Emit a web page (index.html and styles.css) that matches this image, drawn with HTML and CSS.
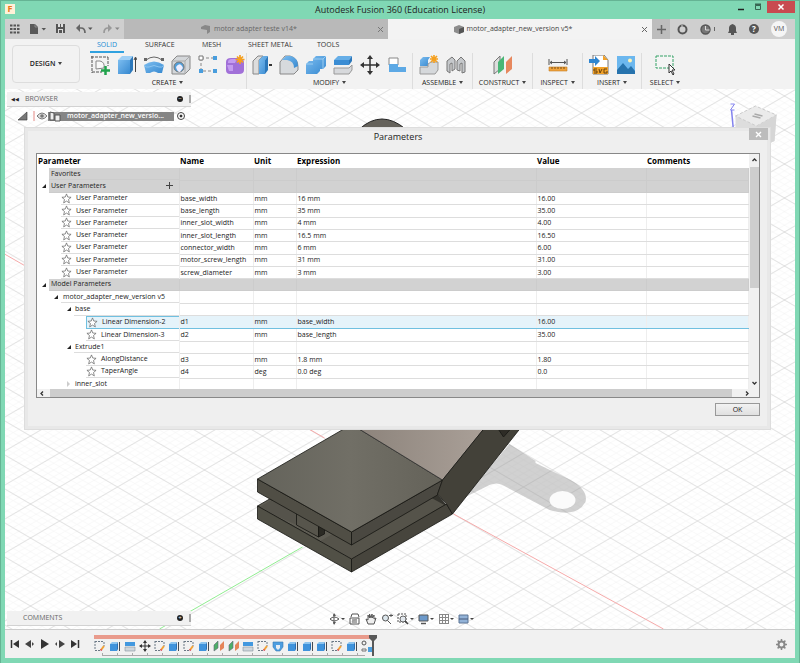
FILE: index.html
```html
<!DOCTYPE html>
<html lang="en">
<head>
<meta charset="utf-8">
<title>Autodesk Fusion 360 (Education License)</title>
<link rel="stylesheet" href="styles.css">
</head>
<body>
<svg class="defs" aria-hidden="true">
  <defs>
    <symbol id="star" viewBox="0 0 12 12"><path d="M6 1l1.400 3.400 3.600.3-2.800 2.400.9 3.700L6 8.800l-3.100 2 .9-3.700L1 4.700l3.600-.3z" fill="#fff" stroke="#666" stroke-width=".8"/></symbol>
    <symbol id="t-sketch" viewBox="0 0 12 12"><path d="M1 1.500h9M1 1v9M1 10.500h6M10 2v4" fill="none" stroke="#6b7885" stroke-dasharray="2 1"/><path d="M7 10l3-4" stroke="#f0a33a" stroke-width="2"/><path d="M6.300 9.500l1.500 1" stroke="#d8405a" stroke-width="1.300"/></symbol>
    <symbol id="t-box" viewBox="0 0 12 12"><path d="M1 4l2-2h6L8 4z" fill="#8dc4ee"/><path d="M1 4h7v7H1z" fill="#3f93dc"/><path d="M8 4l1-2v7l-1 2z" fill="#2a70b5"/><path d="M10.500 2v9" stroke="#454b52"/></symbol>
    <symbol id="t-split" viewBox="0 0 12 12"><path d="M1 2h10v4H1z" fill="#4298df"/><path d="M1 7h10v4H1z" fill="#cfd6dc" stroke="#8794a0" stroke-width=".6"/></symbol>
    <symbol id="t-plane" viewBox="0 0 12 12"><path d="M1 11V5l4-4v7z" fill="#4caf68" stroke="#667" stroke-width=".6"/><path d="M7 11V5l4-4v7z" fill="#e58559"/></symbol>
    <symbol id="t-move" viewBox="0 0 12 12"><path d="M6 1v10M1 6h10" stroke="#333"/><path d="M6 0l2 3H4zM6 12l2-3H4zM0 6l3-2v4zM12 6L9 4v4z" fill="#333"/></symbol>
    <symbol id="t-cut" viewBox="0 0 12 12"><path d="M1 2h10v5l-3 4H4L1 7z" fill="#4d9de0" stroke="#3878b1" stroke-width=".6"/><path d="M4 5h4v3L6 10 4 8z" fill="#e6edf4"/></symbol>
    <linearGradient id="blue" x2="1" y2="1"><stop stop-color="#7cbdf0"/><stop offset="1" stop-color="#3789d0"/></linearGradient>
  </defs>
</svg>

<header class="titlebar">
  <span class="app-logo">F</span>
  <h1>Autodesk Fusion 360 (Education License)</h1>
  <div class="window-buttons">
    <button class="win" aria-label="Minimize"><svg width="8" height="8"><path d="M1 6.500h6" stroke="#222" stroke-width="1.500"/></svg></button>
    <button class="win" aria-label="Maximize"><svg width="8" height="8"><path d="M1.500 2.500h5v4h-5z" fill="none" stroke="#376552"/><path d="M1 1.500h6" stroke="#376552" stroke-width="2"/></svg></button>
    <button class="win close" aria-label="Close"><svg width="8" height="8"><path d="M1.500 1.500l5 5m0-5l-5 5" stroke="#fff" stroke-width="1.500"/></svg></button>
  </div>
</header>

<nav class="tabstrip">
  <div class="quick">
    <button aria-label="Data panel"><svg width="10" height="10"><path d="M0 1.500h10M0 5h10M0 8.500h10" stroke="#555" stroke-width="2.200" stroke-dasharray="2.500 1"/></svg></button>
    <button aria-label="File"><svg width="16" height="10"><path d="M0 0h5l3 3v7H0z" fill="#595959"/><path d="M5 0v3h3" fill="none" stroke="#aaa" stroke-width=".6"/><path d="M11.500 4h4.500l-2.200 2.500z" fill="#555"/></svg></button>
    <button aria-label="Save"><svg width="10" height="10"><path d="M0 0h9v9H0z" fill="#555"/><path d="M2 0h5v3H2zM2 5h5v4H2z" fill="#ddd"/><path d="M4 0h1v3H4zM3 6h3v3H3z" fill="#555"/></svg></button>
    <button aria-label="Undo"><svg width="17" height="10"><path d="M2 4h3q4 0 4 5" fill="none" stroke="#666" stroke-width="1.700"/><path d="M0 4l4-4v8z" fill="#666"/><path d="M12 3.500h4.500l-2.200 2.500z" fill="#555"/></svg></button>
    <button aria-label="Redo"><svg width="17" height="10"><path d="M7 4H5Q1 4 1 9" fill="none" stroke="#999" stroke-width="1.700"/><path d="M9 4L5 0v8z" fill="#999"/><path d="M12 3.500h4.500l-2.200 2.500z" fill="#888"/></svg></button>
  </div>
  <div class="doc-tab"><svg width="10" height="9"><path d="M0 2l4-2 5 1v6L6 9V5L0 4z" fill="#888"/></svg><span>motor adapter teste v14*</span><button aria-label="Close tab"><svg width="7" height="7"><path d="M1 1l5 5m0-5L1 6" stroke="#777"/></svg></button></div>
  <div class="doc-tab active"><svg width="10" height="9"><path d="M0 2l5-2 5 2v5L5 9 0 7z" fill="#8d8d8d"/><path d="M5 4l5-2v5L5 9z" fill="#555"/></svg><span>motor_adapter_new_version v5*</span><button aria-label="Close tab"><svg width="7" height="7"><path d="M1 1l5 5m0-5L1 6" stroke="#666"/></svg></button></div>
  <button class="new-tab" aria-label="New tab"><svg width="9" height="9"><path d="M4.500 0v9M0 4.500h9" stroke="#666" stroke-width="1.500"/></svg></button>
  <div class="account">
    <button aria-label="Extensions"><svg width="11" height="11"><circle cx="5.500" cy="5.500" r="4" fill="none" stroke="#555" stroke-width="2"/><path d="M5 5V1" stroke="#d0d0d0"/></svg></button>
    <button aria-label="Job status"><svg width="16" height="11"><circle cx="5.500" cy="5.500" r="4.500" fill="#777" stroke="#555" stroke-width="1.400"/><path d="M5.500 2v4h4" fill="none" stroke="#ddd"/><path d="M14.500 3v4" stroke="#666"/></svg></button>
    <button aria-label="Notifications"><svg width="9" height="11"><path d="M0 9l1-2V4q0-3 3.500-4Q8 1 8 4v3l1 2z" fill="#555"/><path d="M3 10h3" stroke="#555" stroke-width="2"/></svg></button>
    <button aria-label="Help" class="help">?</button>
    <button class="avatar">VM</button>
  </div>
</nav>

<section class="toolbar">
  <button class="design">DESIGN <i class="caret"></i></button>
  <div class="ribbon">
    <div class="ribbon-tabs"><a href="#" class="on">SOLID</a><a href="#" class="surface">SURFACE</a><a href="#" class="mesh">MESH</a><a href="#" class="sheet">SHEET METAL</a><a href="#">TOOLS</a></div>
    <div class="groups">
      <div class="group create"><div class="icons">
        <svg viewBox="0 0 20 20"><path d="M1 2h17M2 1v17M2 17h10M18 2v9" fill="none" stroke="#555" stroke-dasharray="3 1"/><path d="M6 14V6h4q5 1 4 7z" fill="#f8f8f8" stroke="#888"/><path d="M15.500 11v9M11 15.500h9" stroke="#21a34c" stroke-width="2.500"/></svg>
        <svg viewBox="0 0 20 20"><path d="M1 5l4-4h11l-3 4z" fill="#a0d0f5"/><path d="M1 5h12v14H1z" fill="url(#blue)"/><path d="M13 5l3-4v14l-3 4z" fill="#2c78bb"/><path d="M18.500 3v14M17 5l1.500-3L20 5" fill="none" stroke="#444"/></svg>
        <svg viewBox="0 0 20 20"><path d="M2 5q8-6 16 0" fill="none" stroke="#666"/><path d="M0 3h3v3H0zM17 3h3v3h-3z" fill="#666"/><path d="M0 10q10-7 20 0l-2 8h-4q-4-3-8 0H2z" fill="url(#blue)"/><path d="M0 10q2 3 5 2 5-3 10 0 3 1 5-2" fill="none" stroke="#8cc5f0"/></svg>
        <svg viewBox="0 0 20 20"><path d="M1 6l5-5h13v13l-5 5H1z" fill="#d4d7da" stroke="#888"/><path d="M1 6h13v13M14 6l5-5" fill="none" stroke="#aaa"/><circle cx="8" cy="12" r="5" fill="#519fda" stroke="#777"/><path d="M5 12q4-6 7 1l-3 4q-3 0-4-5" fill="#eef"/></svg>
        <svg viewBox="0 0 20 20"><path d="M3 3h14M3 3v13h14" fill="none" stroke="#888" stroke-dasharray="3 2"/><path d="M1 1h4v4H1z" fill="#fff" stroke="#777"/><path d="M15 1h4v4h-4zM1 14h4v4H1zM15 14h4v4h-4z" fill="#489ddd"/></svg>
        <svg viewBox="0 0 20 20"><path d="M1 7q0-4 5-4h8q5 0 5 5v7q0 4-5 4H5q-4 0-4-4z" fill="#a170d8"/><path d="M3 7q0-3 4-3h5L10 8H3zM2 10h6v6H4z" fill="#c49cf0"/><path d="M15 0v9M10.500 4.500h9M12 1.500l6 6m0-6l-6 6" stroke="#f5a01e" stroke-width="1.700"/></svg>
      </div><button>CREATE <i class="caret"></i></button></div>
      <div class="group modify"><div class="icons">
        <svg viewBox="0 0 20 20"><path d="M1 6l5-5h5L7 5v14H1z" fill="#ddd" stroke="#888"/><path d="M7 5l4-4h5l-3 4v14H7z" fill="url(#blue)"/><path d="M13 5l3-4v14l-3 4z" fill="#2c78bb"/><path d="M17 10h3" stroke="#333" stroke-width="2"/></svg>
        <svg viewBox="0 0 20 20"><path d="M1 7l5-6h5q8 2 8 11v3l-4 4H1z" fill="#d7dadd" stroke="#888"/><path d="M7 1h5q7 2 7 10l-4 2q0-7-7-8H3z" fill="url(#blue)"/></svg>
        <svg viewBox="0 0 20 20"><path d="M7 4l3-3h10v10l-3 3h-3v2l-3 3H0V9l3-3h4z" fill="url(#blue)"/><path d="M7 4h10v10M17 4l3-3M0 9h7" fill="none" stroke="#9bccf1"/></svg>
        <svg viewBox="0 0 20 20"><path d="M1 5l4-4h14l-3 4v4H1z" fill="#66aee7"/><path d="M1 5h15v5H1z" fill="#3b8dd4"/><path d="M16 5l3-4v5l-3 4z" fill="#2c78bb"/><path d="M1 13h15l3-3v5l-3 4H1z" fill="#d7d9dc" stroke="#999"/></svg>
        <svg viewBox="0 0 20 20"><path d="M10 2v16M2 10h16" stroke="#333" stroke-width="1.500"/><path d="M10 0l3 4H7zM10 20l3-4H7zM0 10l4-3v6zM20 10l-4-3v6z" fill="#333"/></svg>
        <svg viewBox="0 0 20 20"><path d="M2 3h9v7H2z" fill="#fff" stroke="#888"/><path d="M2 9h9v3h8v5H2z" fill="#5da9e5"/></svg>
      </div><button>MODIFY <i class="caret"></i></button></div>
      <div class="group assemble"><div class="icons">
        <svg viewBox="0 0 20 20"><path d="M1 5l3-3h7L9 5v6H1z" fill="url(#blue)"/><path d="M1 12h8V9l3-2h7v8l-3 4H1z" fill="#d5d8db" stroke="#999"/><path d="M15 0v8M11 4h8M12 1l6 6m0-6l-6 6" stroke="#f5a01e" stroke-width="1.600"/></svg>
        <svg viewBox="0 0 20 20"><path d="M1 6l5-4 3 3v9l-3 2V8L4 9v9l-3-2zM19 6l-4-4-4 4v9l3 1V9l2-1v10l3-1z" fill="#c5c8cb" stroke="#777"/></svg>
      </div><button>ASSEMBLE <i class="caret"></i></button></div>
      <div class="group construct"><div class="icons"><svg viewBox="0 0 20 20"><path d="M1 7l6-6v13l-6 5z" fill="#ddd" stroke="#777"/><path d="M5 7l6-6v13l-6 5z" fill="#49b675"/><path d="M13 7l6-6v13l-6 5z" fill="#e7885e"/></svg></div><button>CONSTRUCT <i class="caret"></i></button></div>
      <div class="group inspect"><div class="icons"><svg viewBox="0 0 20 20"><path d="M1 4v6M19 4v6M2 7.500h16M4 6L2 7.500 4 9M16 6l2 1.500L16 9" fill="none" stroke="#555"/><path d="M1 12h18v4H1z" fill="#f1a33c" stroke="#c37c24" stroke-width=".6"/><path d="M4 12v2m3-2v2m3-2v2m3-2v2m3-2v2" stroke="#7b5015"/></svg></div><button>INSPECT <i class="caret"></i></button></div>
      <div class="group insert"><div class="icons">
        <svg viewBox="0 0 20 20"><path d="M4 0h11l4 5v14H4z" fill="#fff" stroke="#777"/><path d="M14 0l5 5h-5zM4 12h15v7H4z" fill="#f2a229"/><path d="M8 14H5v2h3v2H5m5-4l1 4 2-4m5 0h-3v4h3v-2" fill="none" stroke="#684411"/><path d="M0 4h6V1l5 5-5 5V8H0z" fill="#2f86d1"/></svg>
        <svg viewBox="0 0 20 20"><path d="M1 1h18v18H1z" fill="#6cb7ee"/><path d="M1 15l6-7 5 6 3-3 4 5v3H1z" fill="#2773ad"/><circle cx="14" cy="5.500" r="2" fill="#fff3b5"/></svg>
      </div><button>INSERT <i class="caret"></i></button></div>
      <div class="group select"><div class="icons"><svg viewBox="0 0 20 20"><path d="M1 1h17v12H1z" fill="#f5f5f5" stroke="#35a266" stroke-dasharray="3 1"/><path d="M14 9v9l2-2 2 4 1-1-2-4h3z" fill="#fff" stroke="#333"/></svg></div><button>SELECT <i class="caret"></i></button></div>
    </div>
  </div>
</section>

<main class="viewport">
  <svg class="scene" viewBox="5 89 791 540" preserveAspectRatio="xMidYMid slice" role="img" aria-label="Motor adapter model">
    <defs>
      <pattern id="grid" width="58" height="34" patternUnits="userSpaceOnUse" x="2" y="11">
        <path d="M0 6.800L11.600 0M0 13.600L23.200 0M0 20.400L34.800 0M0 27.200L46.400 0M11.600 34L58 6.800M23.200 34L58 13.600M34.800 34L58 20.400M46.400 34L58 27.200M46.400 0L58 6.800M34.800 0L58 13.600M23.200 0L58 20.400M11.600 0L58 27.200M0 6.800L46.400 34M0 13.600L34.800 34M0 20.400L23.200 34M0 27.200L11.600 34" stroke="#f3f3f3" stroke-width=".6"/>
        <path d="M0 0l58 34M58 0L0 34" stroke="#d4d4d4" stroke-width=".8"/>
      </pattern>
      <linearGradient id="top" x1="0" x2="1"><stop stop-color="#64635b"/><stop offset=".5" stop-color="#716f66"/><stop offset="1" stop-color="#646259"/></linearGradient>
      <linearGradient id="slope" x1="0" x2="1"><stop stop-color="#8c837b"/><stop offset="1" stop-color="#aaa098"/></linearGradient>
    </defs>
    <path d="M5 89h791v540H5z" fill="#fff"/>
    <path d="M5 89h791v540H5z" fill="url(#grid)"/>
    <path d="M464 498l46-54 26 17v2l35 17q18 10 15 22-9 16-36 8l-47-25q-6-3-13 0z" fill="#999" fill-opacity=".45"/>
    <ellipse cx="563" cy="500" rx="13" ry="9" fill="#fbfbfb"/>
    <path d="M5 254l320 184M454 514l210 115" stroke="#f6aaaa" fill="none"/>
    <path d="M303 547L160 629" stroke="#91ed91"/>
    <path d="M360 129q22-20 46 0z" fill="#65625b" stroke="#222"/>
    <g stroke="#171713" stroke-linejoin="round" stroke-width=".8">
      <path d="M258 506l88-51 101 50-95 54z" fill="#5f5d54"/>
      <path d="M270 499l76-44 92 39 9 11-14 8-15-8-66 40-30-17-26-7z" fill="#34332d" stroke="none"/>
      <path d="M278 499l19 12v14l-22-10-15-8 10-6z" fill="#55534b" stroke="none"/>
      <path d="M352 559l-31-18 12-7 19 11 80-47 13 7z" fill="#55534a" stroke="none"/>
      <path d="M297 510l22 12v15l-22-12z" fill="#57554c"/>
      <path d="M319 522l6 4v8l-6 3z" fill="#2b2a24"/>
      <path d="M258 506l94 53v13l-94-53z" fill="#515046"/>
      <path d="M352 559l95-55 6 10-101 58z" fill="#47453d"/>
      <path d="M258 479l94 53v13l-94-53z" fill="#504e45"/>
      <path d="M352 532l91-52-5 15-86 50z" fill="#4a4841"/>
      <path d="M258 479l88-51h12l85 52-91 52z" fill="url(#top)"/>
      <path d="M358 428h127l-42 52z" fill="url(#slope)" stroke="#333"/>
      <path d="M443 480l42-52h36l-68 86-6-10-9-10z" fill="#434139"/>
      <path d="M498 428h14l-8 9z" fill="#2e2c26"/>
    </g>
    <path d="M734 131l-2-21" stroke="#8282ee" stroke-width="1.500" fill="none"/>
    <path d="M731 104h4l-4 6h4" stroke="#8282ee" fill="none"/>
    <path d="M736 116l20-10 21 9-2 26-18 8-21-10z" fill="#ddd"/>
    <path d="M736 116l20-10 21 9-20 11z" fill="#ebebeb" stroke="#ccc" stroke-dasharray="3 2"/>
    <path d="M757 126l20-11-2 26-18 8z" fill="#d6d6d6"/>
    <path d="M753 116l8 2m-6-4l8 2" stroke="#aaa" stroke-width="1.500"/>
  </svg>

  <aside class="browser">
    <div class="panel-head"><span class="chevrons">◀◀</span><h2>BROWSER</h2><button class="dot" aria-label="Collapse browser">−</button><i class="grip"></i></div>
    <div class="component">
      <svg width="60" height="12"><path d="M10 2v8H1z" fill="#777" stroke="#333" stroke-width=".6"/><path d="M17 1v10" stroke="#e68a85"/><path d="M20 6q5-6 10 0-5 6-10 0z" fill="#ddd" stroke="#777"/><circle cx="25" cy="6" r="1.800" fill="#777"/></svg>
      <div class="selected"><svg width="14" height="12"><path d="M2 2l4 1v7H2zM7 5h5v6H7z" fill="#eee" stroke="#555"/></svg><span>motor_adapter_new_versio...</span></div>
      <label class="radio"><input type="radio" checked aria-label="Activate component"></label>
    </div>
  </aside>

  <section class="comments panel-head"><h2>COMMENTS</h2><button class="dot" aria-label="Expand comments">+</button><i class="grip"></i></section>

  <div class="navbar">
    <button aria-label="Orbit"><svg width="16" height="12"><path d="M5 1v10M1 6q4-4 9 0-5 4-9 0" fill="none" stroke="#555"/><path d="M4 3l1-3 2 3zM4 9l1 3 2-3z" fill="#555"/><path d="M12 5h4l-2 2z" fill="#444"/></svg></button>
    <button aria-label="Look at"><svg width="12" height="12"><path d="M1 5h9v6H1zM2 4l1-3h6l1 3M3 7h5M3 9h5" fill="none" stroke="#555"/></svg></button>
    <button aria-label="Pan"><svg width="12" height="12"><path d="M3 11L1 6l2 1V2l1.500 3V1L6 5l1-4 .5 4L9 2v4l2-1-2 6z" fill="#eee" stroke="#555"/></svg></button>
    <button aria-label="Zoom"><svg width="12" height="12"><circle cx="4.500" cy="5" r="3" fill="#dce6ec" stroke="#555"/><path d="M6.500 7.500L10 11M8 2.500h4M10 1v3" stroke="#555"/></svg></button>
    <button aria-label="Zoom window"><svg width="17" height="12"><path d="M1 1h8v8H1z" fill="none" stroke="#555" stroke-dasharray="2 1"/><circle cx="6" cy="6" r="3" fill="#e2e8ee" stroke="#666"/><path d="M8 8l3 3" stroke="#444" stroke-width="1.500"/><path d="M13 5h4l-2 2z" fill="#444"/></svg></button>
    <button aria-label="Display settings"><svg width="16" height="12"><path d="M1 2h9v6H1z" fill="#6b98c9" stroke="#555"/><path d="M3 10.500h5" stroke="#555" stroke-width="1.500"/><path d="M12 5h4l-2 2z" fill="#444"/></svg></button>
    <button aria-label="Grid settings"><svg width="16" height="12"><path d="M1.500 1v10M4.500 1v10M7.500 1v10M10.500 1v10M1 1.500h10M1 4.500h10M1 7.500h10M1 10.500h10" stroke="#888"/><path d="M12 5h4l-2 2z" fill="#444"/></svg></button>
    <button aria-label="Viewports"><svg width="16" height="12"><path d="M1 2h9v8H1z" fill="#92b2d7" stroke="#5d7494"/><path d="M1 6h9" stroke="#44597a"/><path d="M12 5h4l-2 2z" fill="#444"/></svg></button>
  </div>

  <section class="dialog" role="dialog" aria-labelledby="dlg-title">
    <header><h2 id="dlg-title">Parameters</h2><button class="dialog-close" aria-label="Close dialog"><svg width="7" height="7"><path d="M1 1l5 5m0-5L1 6" stroke="#fff" stroke-width="1.400"/></svg></button></header>
    <div class="sheet-box">
      <div class="table-row">
        <div class="table-clip">
        <table>
          <colgroup><col class="c1"><col class="c2"><col class="c3"><col class="c4"><col class="c5"><col></colgroup>
          <thead><tr><th>Parameter</th><th>Name</th><th>Unit</th><th>Expression</th><th>Value</th><th>Comments</th></tr></thead>
          <tbody>
            <tr class="section"><td><div class="l0">Favorites</div></td><td></td><td></td><td></td><td></td><td></td></tr>
            <tr class="section"><td class="open"><div class="l0">User Parameters<button class="add" aria-label="Add user parameter"><svg width="7" height="7"><path d="M3.500 0v7M0 3.500h7" stroke="#444"/></svg></button></div></td><td></td><td></td><td></td><td></td><td></td></tr>
            <tr><td><div class="l1"><svg><use href="#star"/></svg>User Parameter</div></td><td>base_width</td><td>mm</td><td>16 mm</td><td>16.00</td><td></td></tr>
            <tr><td><div class="l1"><svg><use href="#star"/></svg>User Parameter</div></td><td>base_length</td><td>mm</td><td>35 mm</td><td>35.00</td><td></td></tr>
            <tr><td><div class="l1"><svg><use href="#star"/></svg>User Parameter</div></td><td>inner_slot_width</td><td>mm</td><td>4 mm</td><td>4.00</td><td></td></tr>
            <tr><td><div class="l1"><svg><use href="#star"/></svg>User Parameter</div></td><td>inner_slot_length</td><td>mm</td><td>16.5 mm</td><td>16.50</td><td></td></tr>
            <tr><td><div class="l1"><svg><use href="#star"/></svg>User Parameter</div></td><td>connector_width</td><td>mm</td><td>6 mm</td><td>6.00</td><td></td></tr>
            <tr><td><div class="l1"><svg><use href="#star"/></svg>User Parameter</div></td><td>motor_screw_length</td><td>mm</td><td>31 mm</td><td>31.00</td><td></td></tr>
            <tr><td><div class="l1"><svg><use href="#star"/></svg>User Parameter</div></td><td>screw_diameter</td><td>mm</td><td>3 mm</td><td>3.00</td><td></td></tr>
            <tr class="section"><td class="open"><div class="l0">Model Parameters</div></td><td></td><td></td><td></td><td></td><td></td></tr>
            <tr><td class="open two"><div class="l1 text">motor_adapter_new_version v5</div></td><td></td><td></td><td></td><td></td><td></td></tr>
            <tr><td class="open three"><div class="l2 text">base</div></td><td></td><td></td><td></td><td></td><td></td></tr>
            <tr class="picked"><td><div class="l3"><svg><use href="#star"/></svg>Linear Dimension-2</div></td><td>d1</td><td>mm</td><td>base_width</td><td>16.00</td><td></td></tr>
            <tr><td><div class="l3"><svg><use href="#star"/></svg>Linear Dimension-3</div></td><td>d2</td><td>mm</td><td>base_length</td><td>35.00</td><td></td></tr>
            <tr><td class="open three"><div class="l2 text">Extrude1</div></td><td></td><td></td><td></td><td></td><td></td></tr>
            <tr><td><div class="l3"><svg><use href="#star"/></svg>AlongDistance</div></td><td>d3</td><td>mm</td><td>1.8 mm</td><td>1.80</td><td></td></tr>
            <tr><td><div class="l3"><svg><use href="#star"/></svg>TaperAngle</div></td><td>d4</td><td>deg</td><td>0.0 deg</td><td>0.0</td><td></td></tr>
            <tr><td class="shut three"><div class="l2 text">inner_slot</div></td><td></td><td></td><td></td><td></td><td></td></tr>
          </tbody>
        </table>
        </div>
        <div class="vscroll"><svg width="7" height="6"><path d="M1.500 4l2-2 2 2" fill="none" stroke="#333" stroke-width="1.300"/></svg><i></i><svg width="7" height="6"><path d="M1.500 2l2 2 2-2" fill="none" stroke="#333" stroke-width="1.300"/></svg></div>
      </div>
      <div class="hscroll"><svg width="6" height="7"><path d="M4 1.500l-2 2 2 2" fill="none" stroke="#333" stroke-width="1.300"/></svg><i></i><svg width="6" height="7"><path d="M2 1.500l2 2-2 2" fill="none" stroke="#333" stroke-width="1.300"/></svg></div>
    </div>
    <footer><button class="ok">OK</button></footer>
  </section>
</main>

<footer class="timeline">
  <div class="playback">
    <button aria-label="Go to start"><svg width="10" height="10"><path d="M1.500 1v8" stroke="#333" stroke-width="1.500"/><path d="M9 1v8L3 5z" fill="#333"/></svg></button>
    <button aria-label="Step back"><svg width="10" height="10"><path d="M6 1v8L0 5zM7 3l2 2-2 2z" fill="#444"/></svg></button>
    <button aria-label="Play"><svg width="10" height="10"><path d="M1 0l8 5-8 5z" fill="#333"/></svg></button>
    <button aria-label="Step forward"><svg width="10" height="10"><path d="M4 1l6 4-6 4zM2 3v4L0 5z" fill="#444"/></svg></button>
    <button aria-label="Go to end"><svg width="10" height="10"><path d="M8.500 1v8" stroke="#333" stroke-width="1.500"/><path d="M1 1l6 4-6 4z" fill="#333"/></svg></button>
  </div>
  <div class="history">
    <div class="bar"></div>
    <div class="features">
      <svg><use href="#t-sketch"/></svg><svg><use href="#t-box"/></svg><svg><use href="#t-split"/></svg><svg><use href="#t-move"/></svg><svg><use href="#t-sketch"/></svg><svg><use href="#t-box"/></svg><svg><use href="#t-sketch"/></svg><svg><use href="#t-box"/></svg><svg><use href="#t-plane"/></svg><svg><use href="#t-plane"/></svg><svg><use href="#t-split"/></svg><svg><use href="#t-sketch"/></svg><svg><use href="#t-cut"/></svg><svg><use href="#t-box"/></svg><svg><use href="#t-box"/></svg><svg><use href="#t-box"/></svg><svg><use href="#t-sketch"/></svg><svg><use href="#t-box"/></svg><svg viewBox="0 0 12 12"><circle cx="3" cy="3" r="2" fill="none" stroke="#555"/><path d="M1 9h4v2H1z" fill="none" stroke="#777"/><path d="M7 7h5v5H7z" fill="#4b9ede"/></svg>
    </div>
    <div class="ticks"></div>
    <svg class="marker" width="8" height="21"><path d="M0 0h8v3L5 6v15H3V6L0 3z" fill="#595959"/></svg>
  </div>
  <button class="gear" aria-label="Timeline settings"><svg width="11" height="11"><circle cx="5.500" cy="5.500" r="3" fill="none" stroke="#888" stroke-width="2"/><path d="M5.500 0v2m0 7v2M0 5.500h2m7 0h2M1.600 1.600L3 3m5 5l1.400 1.400M9.400 1.600L8 3M3 8L1.600 9.400" stroke="#888" stroke-width="1.500"/></svg></button>
</footer>
</body>
</html>
```
FILE: styles.css
```css
* { box-sizing: border-box; }
body {
  margin: 0;
  min-height: 100vh;
  display: flex;
  flex-direction: column;
  padding: 0 4px 5px;
  background: #80d8b4;
  border: 1px solid #65b494;
  border-bottom: 0;
  font: 7px/12px "Open Sans", sans-serif;
  color: #222;
}
h1, h2 { margin: 0; font-weight: 400; }
button { border: 0; padding: 0; margin: 0; background: none; color: inherit; font: inherit; }
svg { display: block; flex: none; }
.defs { position: absolute; width: 0; height: 0; }

.titlebar { height: 18px; display: grid; grid-template-columns: 1fr auto 1fr; align-items: start; }
.titlebar h1 { font-size: 9px; line-height: 18px; }
.app-logo { width: 10px; height: 10px; margin-top: 3px; background: #fff1d8; color: #e87818; font: bold 9px/10px "Open Sans", sans-serif; text-align: center; }
.window-buttons { display: flex; justify-content: flex-end; gap: 1px; }
.win { width: 16px; height: 12px; display: grid; place-items: center; }
.win.close { width: 28px; background: #c84b50; }

.tabstrip { height: 20px; display: flex; align-items: stretch; background: #cfcfcf; }
.quick { width: 119px; padding-left: 5px; display: flex; align-items: center; gap: 10px; }
.doc-tab { flex: 1; display: flex; align-items: center; justify-content: center; gap: 3px; background: #b9b9b9; color: #666; font-size: 7px; }
.doc-tab button { margin-left: auto; padding-right: 4px; }
.doc-tab svg:first-child { margin-left: auto; }
.doc-tab.active { background: #f3f3f3; color: #444; }
.new-tab { width: 18px; display: grid; place-items: center; background: #bdbdbd; }
.account { display: flex; align-items: center; gap: 12px; padding: 0 8px 0 7px; }
.help { width: 10px; height: 10px; border-radius: 50%; background: #555; color: #fff; font: bold 8px/10px "Open Sans", sans-serif; }
.avatar { width: 16px; height: 16px; border-radius: 50%; background: #f5f5f5; color: #555; }

.toolbar { height: 50px; display: flex; background: #f2f2f2; }
.design { width: 68px; height: 38px; margin: 6px 9px 0 7px; border: 1px solid #ddd; border-radius: 4px; font-weight: 600; }
.caret { display: inline-block; border: 2px solid transparent; border-top: 3px solid #444; border-bottom: 0; margin: 0 0 1px 1px; }
.ribbon-tabs { display: flex; height: 14px; padding-left: 1px; }
.ribbon-tabs a { color: #333; text-decoration: none; }
.ribbon-tabs .on { width: 34px; margin-right: 21px; text-align: center; color: #168bd2; border-bottom: 2px solid #30a1df; }
.ribbon-tabs .surface { width: 57px; }
.ribbon-tabs .mesh { width: 46px; }
.ribbon-tabs .sheet { width: 69px; }
.groups { display: flex; }
.group { display: flex; flex-direction: column; align-items: center; border-right: 1px solid #ddd; }
.group:last-child { border: 0; }
.group > button { height: 12px; }
.icons { display: flex; gap: 7px; height: 24px; padding-top: 2px; }
.icons svg { width: 20px; height: 20px; }
.create { width: 158px; }
.modify { width: 166px; }
.assemble { width: 60px; }
.construct { width: 60px; }
.inspect { width: 50px; }
.insert { width: 59px; }
.select { width: 46px; }

.viewport { position: relative; flex: 1; min-height: 400px; overflow: hidden; background: #fff; }
.scene { position: absolute; inset: 0; width: 100%; height: 100%; }
.browser { position: absolute; left: 2px; top: 3px; width: 184px; }
.panel-head { height: 15px; display: flex; align-items: center; gap: 6px; padding: 0 0 0 4px; background: #f1f1f1; border-bottom: 1px solid #d2d2d2; color: #666; }
.panel-head h2 { flex: 1; font-size: 7px; }
.chevrons { font-size: 5px; color: #222; }
.dot { width: 6px; height: 6px; border-radius: 50%; background: #222; color: #fff; font-size: 6px; line-height: 6px; }
.grip { width: 2px; height: 8px; background: #aaa; }
.component { height: 18px; display: flex; align-items: center; padding-left: 10px; }
.component > svg { width: 31px; }
.selected { width: 126px; display: flex; gap: 5px; align-items: center; height: 9px; background: #858585; color: #fff; font-weight: 600; }
.radio input { display: block; width: 8px; height: 8px; margin: 0 0 0 3px; appearance: none; border: 1px solid #444; border-radius: 50%; background: radial-gradient(#333 30%, #fff 40%); }
.comments { position: absolute; left: 2px; bottom: 3px; width: 184px; padding-left: 16px; }
.navbar { position: absolute; left: 41%; bottom: 4px; display: flex; gap: 4px; }

.dialog { position: absolute; left: 19px; right: 24px; top: 38px; padding: 0 10px 13px 11px; border: 1px solid #ddd; background: #efefef; box-shadow: inset 0 0 0 3px #e8e8e8; }
.dialog header { position: relative; height: 25px; display: grid; justify-items: center; align-items: start; }
.dialog h2 { font-size: 9px; line-height: 18px; }
.dialog-close { position: absolute; right: -8px; top: 0; width: 19px; height: 12px; display: grid; place-items: center; background: #bcbcbc; }
.sheet-box { background: #fff; border: 1px solid #888; }
.table-row { display: flex; height: 235px; }
.table-clip { flex: 1; overflow: hidden; }
table { width: 100%; height: 237px; table-layout: fixed; border-collapse: collapse; }
.c1 { width: 142px; } .c2 { width: 74px; } .c3 { width: 43px; } .c4 { width: 240px; } .c5 { width: 110px; }
th { height: 14px; padding: 0 1px; text-align: left; font-size: 8px; font-weight: 700; color: #000; }
td { height: 12px; padding: 0 1px; line-height: 10px; border-right: 1px solid #eee; border-bottom: 1px solid #ddd; white-space: nowrap; }
td:first-child { position: relative; padding: 0; border-bottom: 0; }
td > div { display: flex; align-items: center; height: 100%; border-bottom: 1px solid #ddd; }
td > div svg { width: 11px; height: 11px; margin-right: 4px; }
.l0 { margin-left: 12px; padding-left: 2px; }
.l1 { margin-left: 24px; }
.l2 { margin-left: 37px; padding-left: 1px; }
.l3 { margin-left: 49px; }
.l1.text { padding-left: 2px; }
.section td { background: #d2d2d2; border-color: #ccc; }
.section td:first-child { background: linear-gradient(90deg, #fff 12px, #d2d2d2 12px); }
.section td > div { border-color: #ccc; }
.open::before { content: ""; position: absolute; left: 5px; top: 4px; border: 2px solid #222; border-top-color: transparent; border-left-color: transparent; }
.open.two::before { left: 17px; }
.open.three::before { left: 30px; }
.shut::before { content: ""; position: absolute; left: 30px; top: 3px; border: 3px solid transparent; border-left-color: #ccc; }
.picked td { background: #e5f3fa; border-top: 1px solid #70c0e0; border-bottom: 1px solid #70c0e0; }
.picked td:first-child { background: linear-gradient(90deg, #fff 49px, #e5f3fa 49px); border-top: 0; border-bottom: 0; }
.picked td > div { border-top: 1px solid #70c0e0; border-bottom: 1px solid #70c0e0; border-left: 1px solid #70c0e0; }
.add { margin: 0 6px 0 auto; }
.add svg { margin: 0 !important; width: 7px !important; height: 7px !important; }
.vscroll { width: 10px; display: flex; flex-direction: column; align-items: center; padding: 3px 0; background: #f1f1f1; }
.vscroll i { width: 9px; height: 121px; margin: 4px 0 auto; background: #cecece; }
.hscroll { display: flex; align-items: center; height: 8px; gap: 5px; padding: 0 0 0 2px; background: #f1f1f1; }
.hscroll i { flex: 1; height: 8px; background: #cdcdcd; }
.hscroll svg:last-child { margin: 0 9px 0 7px; }
.dialog footer { display: flex; justify-content: flex-end; padding-top: 5px; }
.ok { width: 45px; height: 13px; border: 1px solid #999; background: linear-gradient(#f2f2f2, #e0e0e0); }

.timeline { height: 29px; display: flex; align-items: center; padding: 0 8px 0 5px; background: #f1f1f1; border-top: 1px solid #ccc; }
.playback { display: flex; gap: 5px; margin-right: 14px; }
.history { position: relative; align-self: stretch; padding-top: 5px; }
.bar { height: 4px; background: #e99b8c; }
.features { display: flex; gap: 3px; padding: 1px 0; }
.features svg { width: 12px; height: 12px; }
.features svg:nth-child(5n) { margin-right: -1px; }
.ticks { height: 3px; margin: 0 8px; border-bottom: 1px solid #aaa; background: repeating-linear-gradient(90deg, #aaa 0 1px, transparent 1px 15px); }
.marker { position: absolute; right: -4px; top: 5px; }
.gear { margin-left: auto; }
```
